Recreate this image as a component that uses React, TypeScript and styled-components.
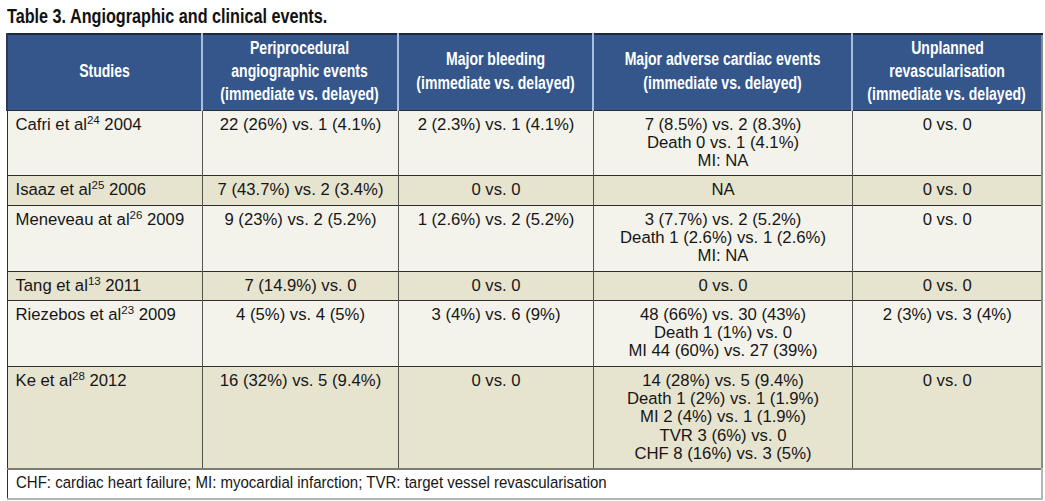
import React from 'react'
import styled, { createGlobalStyle } from 'styled-components'

const GlobalStyle = createGlobalStyle`
  html, body {
    margin: 0;
    padding: 0;
    background: #ffffff;
  }
`

// no condensed face is installed, so Arial metrics are squeezed per line
const Squeeze = styled.span<{ $scale: number; $center?: boolean }>`
  display: inline-block;
  white-space: nowrap;
  transform: scaleX(${p => p.$scale});
  transform-origin: ${p => (p.$center ? 'center' : 'left')} center;
`

const Page = styled.div`
  padding: 5px 0 0 6px;
  width: 1035px;
`

const Caption = styled.h1`
  margin: 0 0 6px 1px;
  height: 22px;
  font-family: "Liberation Sans", Arial, sans-serif;
  font-weight: 700;
  font-size: 19.5px;
  line-height: 22px;
  color: #111111;
`

const Table = styled.table`
  width: 1035px;
  border-collapse: collapse;
  table-layout: fixed;
  border-right: 2px solid #8a8a84;
  font-family: "Liberation Sans", Arial, sans-serif;
  font-size: 16.7px;
  color: #161616;
`

const HeadRow = styled.tr`
  background: #34568b;
  border-top: 2px solid #1e2838;
`

const HeadCell = styled.th<{ $first?: boolean }>`
  height: 76px;
  padding: 1px 0 2px;
  box-sizing: border-box;
  border-left: 2px solid ${p => (p.$first ? '#2b3a52' : '#a9bedd')};
  vertical-align: middle;
`

const HeadStack = styled.div`
  display: flex;
  flex-direction: column;
  align-items: center;
  font-family: "Liberation Sans", Arial, sans-serif;
  font-weight: 700;
  font-size: 18px;
  line-height: 23.4px;
  color: #ffffff;
`

const BodyRow = styled.tr<{ $alt?: boolean }>`
  background: ${p => (p.$alt ? '#e6e3cf' : '#f4f3eb')};
  border-top: 1px solid #2e2e2e;
`

const Cell = styled.td<{ $left?: boolean }>`
  padding: 5px 8px 5px ${p => (p.$left ? '8px' : '9px')};
  line-height: 18.3px;
  vertical-align: top;
  text-align: ${p => (p.$left ? 'left' : 'center')};
  border-left: 1px solid ${p => (p.$left ? '#2e2e2e' : '#55554f')};
  white-space: nowrap;
`

const Sup = styled.sup`
  font-size: 11.5px;
  line-height: 0;
  vertical-align: 6px;
`

const Line = styled.div``

const FootRow = styled.tr`
  background: #ffffff;
  border-top: 2px solid #7d7d78;
  border-bottom: 2px solid #b5b5b5;
`

const FootCell = styled.td`
  padding: 4px 8px 5px;
  line-height: 18.3px;
  text-align: left;
  border-left: 1px solid #2e2e2e;
  border-right: 2px solid #b5b5b5;
`

type Row = {
  name: string
  ref: string
  year: string
  cells: string[][]
}

const heads: string[][] = [
  ['Studies'],
  ['Periprocedural', 'angiographic events', '(immediate vs. delayed)'],
  ['Major bleeding', '(immediate vs. delayed)'],
  ['Major adverse cardiac events', '(immediate vs. delayed)'],
  ['Unplanned', 'revascularisation', '(immediate vs. delayed)'],
]

const rows: Row[] = [
  {
    name: 'Cafri et al',
    ref: '24',
    year: '2004',
    cells: [
      ['22 (26%) vs. 1 (4.1%)'],
      ['2 (2.3%) vs. 1 (4.1%)'],
      ['7 (8.5%) vs. 2 (8.3%)', 'Death 0 vs. 1 (4.1%)', 'MI: NA'],
      ['0 vs. 0'],
    ],
  },
  {
    name: 'Isaaz et al',
    ref: '25',
    year: '2006',
    cells: [['7 (43.7%) vs. 2 (3.4%)'], ['0 vs. 0'], ['NA'], ['0 vs. 0']],
  },
  {
    name: 'Meneveau at al',
    ref: '26',
    year: '2009',
    cells: [
      ['9 (23%) vs. 2 (5.2%)'],
      ['1 (2.6%) vs. 2 (5.2%)'],
      ['3 (7.7%) vs. 2 (5.2%)', 'Death 1 (2.6%) vs. 1 (2.6%)', 'MI: NA'],
      ['0 vs. 0'],
    ],
  },
  {
    name: 'Tang et al',
    ref: '13',
    year: '2011',
    cells: [['7 (14.9%) vs. 0'], ['0 vs. 0'], ['0 vs. 0'], ['0 vs. 0']],
  },
  {
    name: 'Riezebos et al',
    ref: '23',
    year: '2009',
    cells: [
      ['4 (5%) vs. 4 (5%)'],
      ['3 (4%) vs. 6 (9%)'],
      ['48 (66%) vs. 30 (43%)', 'Death 1 (1%) vs. 0', 'MI 44 (60%) vs. 27 (39%)'],
      ['2 (3%) vs. 3 (4%)'],
    ],
  },
  {
    name: 'Ke et al',
    ref: '28',
    year: '2012',
    cells: [
      ['16 (32%) vs. 5 (9.4%)'],
      ['0 vs. 0'],
      [
        '14 (28%) vs. 5 (9.4%)',
        'Death 1 (2%) vs. 1 (1.9%)',
        'MI 2 (4%) vs. 1 (1.9%)',
        'TVR 3 (6%) vs. 0',
        'CHF 8 (16%) vs. 3 (5%)',
      ],
      ['0 vs. 0'],
    ],
  },
]

const App: React.FC = () => {
  return (
    <Page>
      <GlobalStyle />
      <Caption>
        <Squeeze $scale={0.83}>Table 3. Angiographic and clinical events.</Squeeze>
      </Caption>
      <Table>
        <colgroup>
          <col style={{ width: 195 }} />
          <col style={{ width: 196 }} />
          <col style={{ width: 195 }} />
          <col style={{ width: 259 }} />
          <col style={{ width: 190 }} />
        </colgroup>
        <thead>
          <HeadRow>
            {heads.map((lines, i) => (
              <HeadCell key={i} $first={i === 0}>
                <HeadStack>
                  {lines.map(l => (
                    <Squeeze key={l} $scale={0.78} $center>
                      {l}
                    </Squeeze>
                  ))}
                </HeadStack>
              </HeadCell>
            ))}
          </HeadRow>
        </thead>
        <tbody>
          {rows.map((row, i) => (
            <BodyRow key={row.name} $alt={i % 2 === 1}>
              <Cell $left>
                {row.name}
                <Sup>{row.ref}</Sup> {row.year}
              </Cell>
              {row.cells.map((lines, j) => (
                <Cell key={j}>
                  {lines.map(l => (
                    <Line key={l}>{l}</Line>
                  ))}
                </Cell>
              ))}
            </BodyRow>
          ))}
          <FootRow>
            <FootCell colSpan={5}>
              <Squeeze $scale={0.9}>
                CHF: cardiac heart failure; MI: myocardial infarction; TVR: target vessel revascularisation
              </Squeeze>
            </FootCell>
          </FootRow>
        </tbody>
      </Table>
    </Page>
  )
}

export default App
